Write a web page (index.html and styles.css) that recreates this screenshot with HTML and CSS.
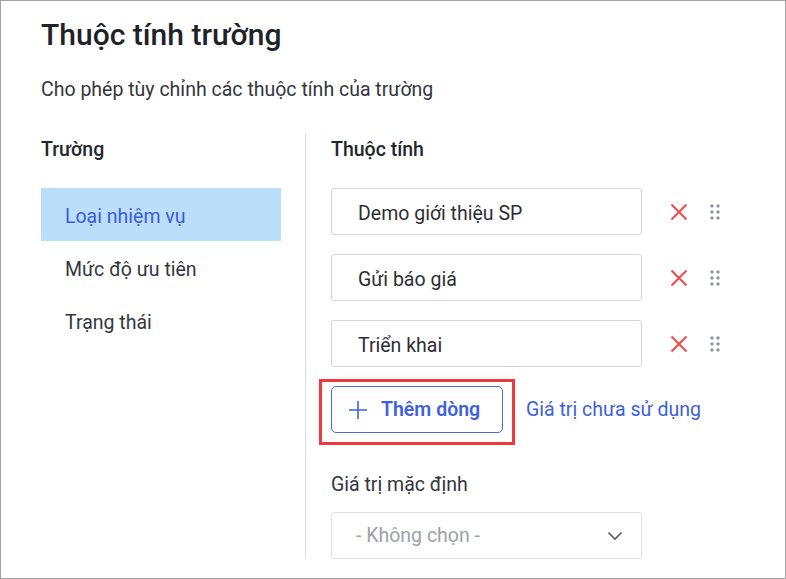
FILE: index.html
```html
<!DOCTYPE html>
<html lang="vi">
<head>
<meta charset="utf-8">
<title>Thuộc tính trường</title>
<link rel="stylesheet" href="styles.css">
</head>
<body>
<div class="frame">
  <h1 class="title">Thuộc tính trường</h1>
  <p class="desc">Cho phép tùy chỉnh các thuộc tính của trường</p>
  <div class="cols">
    <div class="left">
      <div class="col-head">Trường</div>
      <ul class="fields">
        <li class="field active">Loại nhiệm vụ</li>
        <li class="field">Mức độ ưu tiên</li>
        <li class="field">Trạng thái</li>
      </ul>
    </div>
    <div class="right">
      <div class="col-head">Thuộc tính</div>
      <div class="rows">
        <div class="row">
          <div class="input">Demo giới thiệu SP</div>
          <svg class="del" width="20" height="20" viewBox="0 0 20 20"><path d="M2.5 2.5L17.5 17.5M17.5 2.5L2.5 17.5" stroke="#f04a4f" stroke-width="2" fill="none"/></svg>
          <svg class="drag" width="20" height="20" viewBox="0 0 20 20"><g fill="#8a93a5"><rect x="5.5" y="2.5" width="3" height="3" rx="0.8"/><rect x="11.5" y="2.5" width="3" height="3" rx="0.8"/><rect x="5.5" y="8.5" width="3" height="3" rx="0.8"/><rect x="11.5" y="8.5" width="3" height="3" rx="0.8"/><rect x="5.5" y="14.5" width="3" height="3" rx="0.8"/><rect x="11.5" y="14.5" width="3" height="3" rx="0.8"/></g></svg>
        </div>
        <div class="row">
          <div class="input">Gửi báo giá</div>
          <svg class="del" width="20" height="20" viewBox="0 0 20 20"><path d="M2.5 2.5L17.5 17.5M17.5 2.5L2.5 17.5" stroke="#f04a4f" stroke-width="2" fill="none"/></svg>
          <svg class="drag" width="20" height="20" viewBox="0 0 20 20"><g fill="#8a93a5"><rect x="5.5" y="2.5" width="3" height="3" rx="0.8"/><rect x="11.5" y="2.5" width="3" height="3" rx="0.8"/><rect x="5.5" y="8.5" width="3" height="3" rx="0.8"/><rect x="11.5" y="8.5" width="3" height="3" rx="0.8"/><rect x="5.5" y="14.5" width="3" height="3" rx="0.8"/><rect x="11.5" y="14.5" width="3" height="3" rx="0.8"/></g></svg>
        </div>
        <div class="row">
          <div class="input">Triển khai</div>
          <svg class="del" width="20" height="20" viewBox="0 0 20 20"><path d="M2.5 2.5L17.5 17.5M17.5 2.5L2.5 17.5" stroke="#f04a4f" stroke-width="2" fill="none"/></svg>
          <svg class="drag" width="20" height="20" viewBox="0 0 20 20"><g fill="#8a93a5"><rect x="5.5" y="2.5" width="3" height="3" rx="0.8"/><rect x="11.5" y="2.5" width="3" height="3" rx="0.8"/><rect x="5.5" y="8.5" width="3" height="3" rx="0.8"/><rect x="11.5" y="8.5" width="3" height="3" rx="0.8"/><rect x="5.5" y="14.5" width="3" height="3" rx="0.8"/><rect x="11.5" y="14.5" width="3" height="3" rx="0.8"/></g></svg>
        </div>
      </div>
      <div class="actions">
        <div class="btn-wrap">
          <button class="add-btn">
            <svg width="20" height="20" viewBox="0 0 20 20"><path d="M10 1V19M1 10H19" stroke="#3d5fe0" stroke-width="1.6" fill="none"/></svg>
            <span>Thêm dòng</span>
          </button>
          <span class="highlight"></span>
        </div>
        <a class="link" href="#">Giá trị chưa sử dụng</a>
      </div>
      <div class="label">Giá trị mặc định</div>
      <div class="select">
        <span class="placeholder">- Không chọn -</span>
        <svg width="16" height="10" viewBox="0 0 16 10"><path d="M1.5 1.5L8 8L14.5 1.5" stroke="#555a63" stroke-width="1.6" fill="none"/></svg>
      </div>
    </div>
  </div>
</div>
</body>
</html>
```

FILE: styles.css
```css
* { box-sizing: border-box; }
html, body { margin: 0; padding: 0; background: #fff; }
body { font-family: Roboto, "Noto Sans", "Liberation Sans", sans-serif; color: #2b2e34; }

.frame {
  width: 786px;
  height: 579px;
  border: 1px solid #a4a4a4;
  padding: 17px 0 0 40px;
  overflow: hidden;
}

.title {
  margin: 0;
  font-size: 30px;
  line-height: 34px;
  font-weight: 500;
  color: #1f2329;
}

.desc {
  margin: 26px 0 0;
  font-size: 19.5px;
  line-height: 24px;
  color: #33363c;
}

.cols {
  display: flex;
  margin-top: 31px;
}

.left {
  width: 240px;
  margin-right: 24px;
}

.right {
  border-left: 1px solid #d9dce1;
  padding-left: 25px;
  width: 420px;
}

.col-head {
  padding-top: 5px;
  font-size: 19.5px;
  line-height: 24px;
  font-weight: 500;
  color: #23262b;
  margin-bottom: 26px;
}

.fields { list-style: none; margin: 0; padding: 0; }
.field {
  height: 53px;
  display: flex;
  align-items: center;
  padding-left: 24px;
  padding-top: 3px;
  font-size: 19.5px;
  color: #33363c;
}
.field.active { background: #bbdefb; color: #3a5ce0; }

.rows { display: flex; flex-direction: column; gap: 19px; }
.row { display: flex; align-items: center; }
.input {
  width: 311px;
  height: 47px;
  border: 1px solid #d3d6db;
  border-radius: 3px;
  padding-left: 26px;
  padding-top: 4px;
  display: flex;
  align-items: center;
  font-size: 19.5px;
  color: #2b2e34;
}
.del { margin-left: 27px; }
.drag { margin-left: 16px; }

.actions {
  display: flex;
  align-items: center;
  margin-top: 19px;
}
.btn-wrap { position: relative; }
.add-btn {
  width: 172px;
  height: 47px;
  border: 1px solid #4a69e6;
  border-radius: 5px;
  background: #fff;
  display: flex;
  align-items: center;
  padding: 0 0 0 16px;
  gap: 13px;
  font-family: inherit;
  font-size: 19.5px;
  font-weight: 600;
  color: #3d5fe0;
  cursor: pointer;
}
.highlight {
  position: absolute;
  left: -12px;
  top: -7px;
  width: 196px;
  height: 66px;
  border: 3px solid #f2383d;
  pointer-events: none;
}
.link {
  margin-left: 23px;
  font-size: 19.5px;
  color: #3d5fe0;
  text-decoration: none;
}

.label {
  margin-top: 40px;
  font-size: 19.5px;
  line-height: 24px;
  color: #33363c;
}

.select {
  margin-top: 15px;
  width: 311px;
  height: 47px;
  border: 1px solid #dfe2e6;
  border-radius: 3px;
  padding: 0 18px 0 24px;
  display: flex;
  align-items: center;
  justify-content: space-between;
  font-size: 19.5px;
}
.placeholder { color: #9ba1ab; }
```
